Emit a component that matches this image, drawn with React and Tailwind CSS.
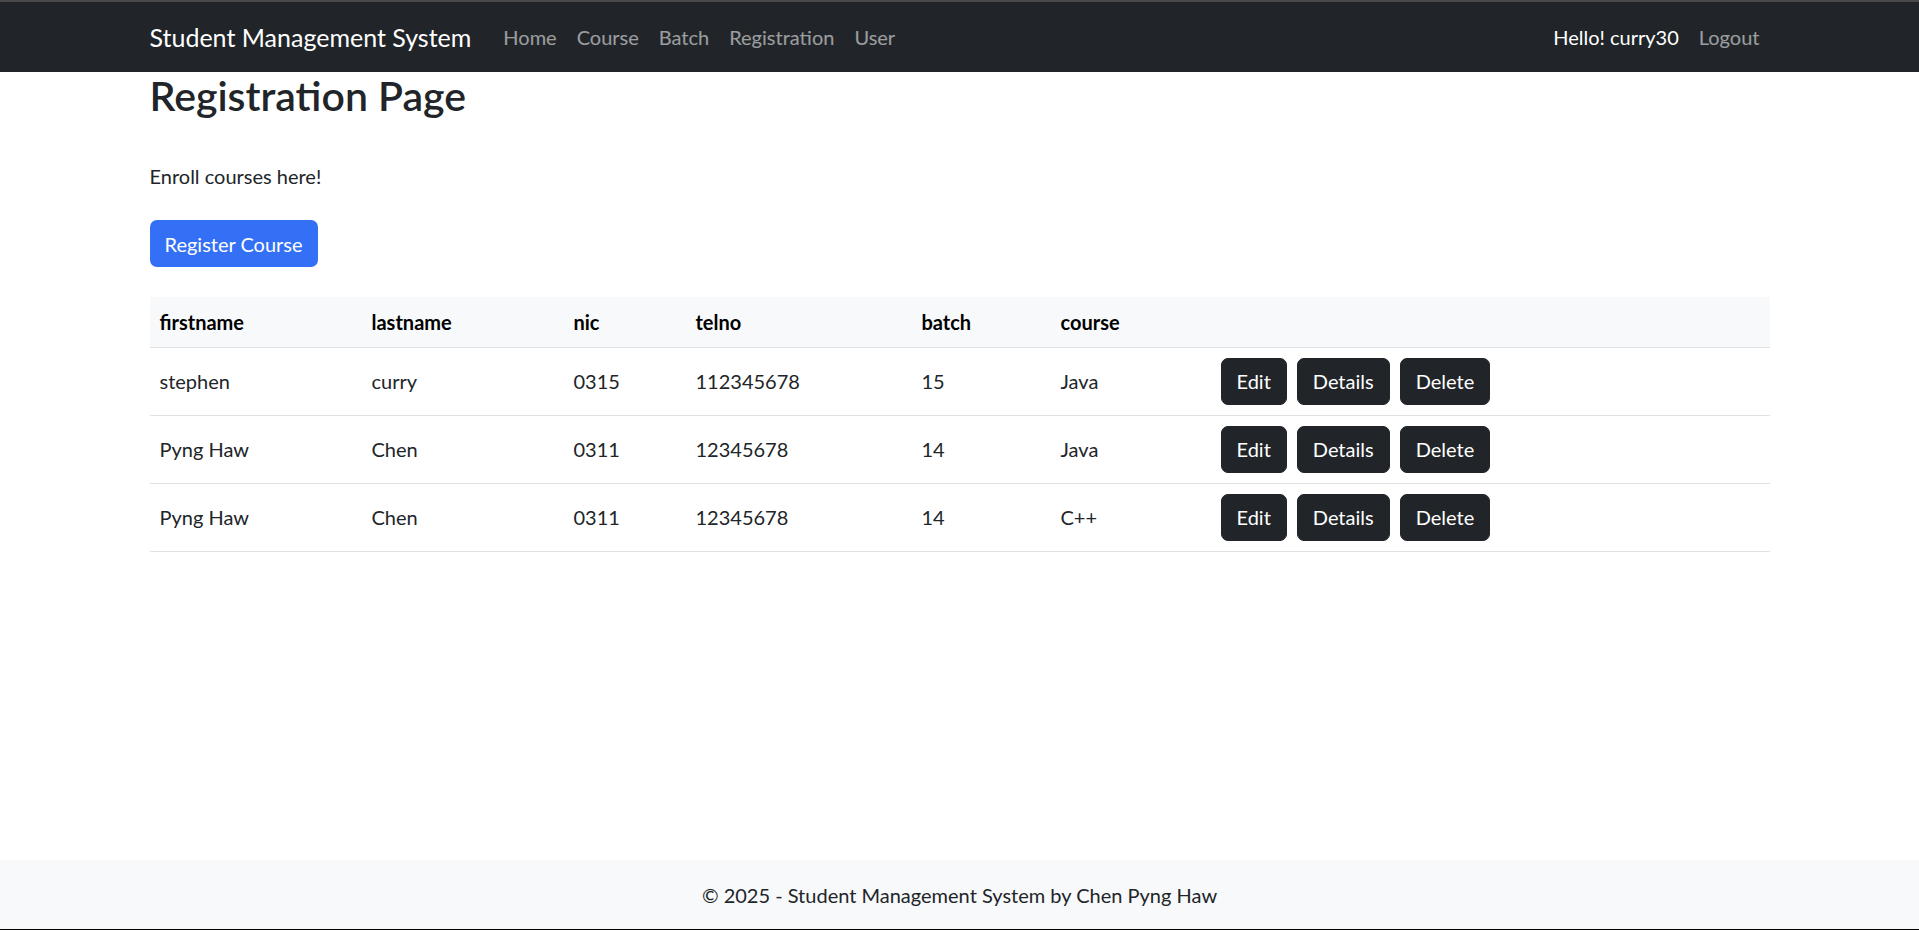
import React from "react";

const rows = [
  ["stephen", "curry", "0315", "112345678", "15", "Java"],
  ["Pyng Haw", "Chen", "0311", "12345678", "14", "Java"],
  ["Pyng Haw", "Chen", "0311", "12345678", "14", "C++"],
];

function DarkBtn({ children }) {
  return (
    <button className="h-[47px] px-[15px] rounded-[7px] bg-[#212529] text-white text-[20px] leading-[30px] border border-[#212529]">
      {children}
    </button>
  );
}

export default function App() {
  return (
    <div
      className="min-h-screen flex flex-col bg-white text-[#212529]"
      style={{ fontFamily: "Lato, 'Open Sans', sans-serif" }}
    >
      <div className="h-[2px] bg-[#4a4a4a]" />
      <nav className="h-[70px] bg-[#212529]">
        <div className="w-[1620px] mx-auto h-full flex items-center">
          <span className="text-white text-[25px] leading-[37px] mr-[22px]">Student Management System</span>
          <div className="flex items-center text-[20px] text-white/55">
            <a className="px-[10px]">Home</a>
            <a className="px-[10px]">Course</a>
            <a className="px-[10px]">Batch</a>
            <a className="px-[10px]">Registration</a>
            <a className="px-[10px]">User</a>
          </div>
          <div className="ml-auto flex items-center text-[20px]">
            <span className="px-[10px] text-white">Hello! curry30</span>
            <a className="px-[10px] text-white/55">Logout</a>
          </div>
        </div>
      </nav>
      <main className="flex-1">
        <div className="w-[1620px] mx-auto">
          <h2 className="text-[41px] leading-[48px] font-semibold">Registration Page</h2>
          <p className="mt-[41px] text-[20px] leading-[30px]">Enroll courses here!</p>
          <button className="mt-[29px] h-[47px] px-[15px] rounded-[7px] bg-[#3470f5] text-white text-[20px] leading-[30px]">
            Register Course
          </button>
          <table className="mt-[30px] w-full border-collapse text-[20px] leading-[30px]">
            <colgroup>
              <col className="w-[212px]" />
              <col className="w-[202px]" />
              <col className="w-[122px]" />
              <col className="w-[226px]" />
              <col className="w-[139px]" />
              <col className="w-[160px]" />
              <col />
            </colgroup>
            <thead>
              <tr className="bg-[#f8f9fa] border-b border-[#dee2e6] text-black">
                {["firstname", "lastname", "nic", "telno", "batch", "course", ""].map((h, i) => (
                  <th key={i} className="h-[50px] px-[10px] text-left font-bold">{h}</th>
                ))}
              </tr>
            </thead>
            <tbody>
              {rows.map((r, i) => (
                <tr key={i} className="border-b border-[#dee2e6]">
                  {r.map((c, j) => (
                    <td key={j} className="h-[68px] px-[10px]">{c}</td>
                  ))}
                  <td className="px-[10px]">
                    <div className="flex gap-[10px]">
                      <DarkBtn>Edit</DarkBtn>
                      <DarkBtn>Details</DarkBtn>
                      <DarkBtn>Delete</DarkBtn>
                    </div>
                  </td>
                </tr>
              ))}
            </tbody>
          </table>
        </div>
      </main>
      <footer className="h-[70px] bg-[#f8f9fa] border-b border-black flex items-center justify-center text-[20px]">
        © 2025 - Student Management System by Chen Pyng Haw
      </footer>
    </div>
  );
}
